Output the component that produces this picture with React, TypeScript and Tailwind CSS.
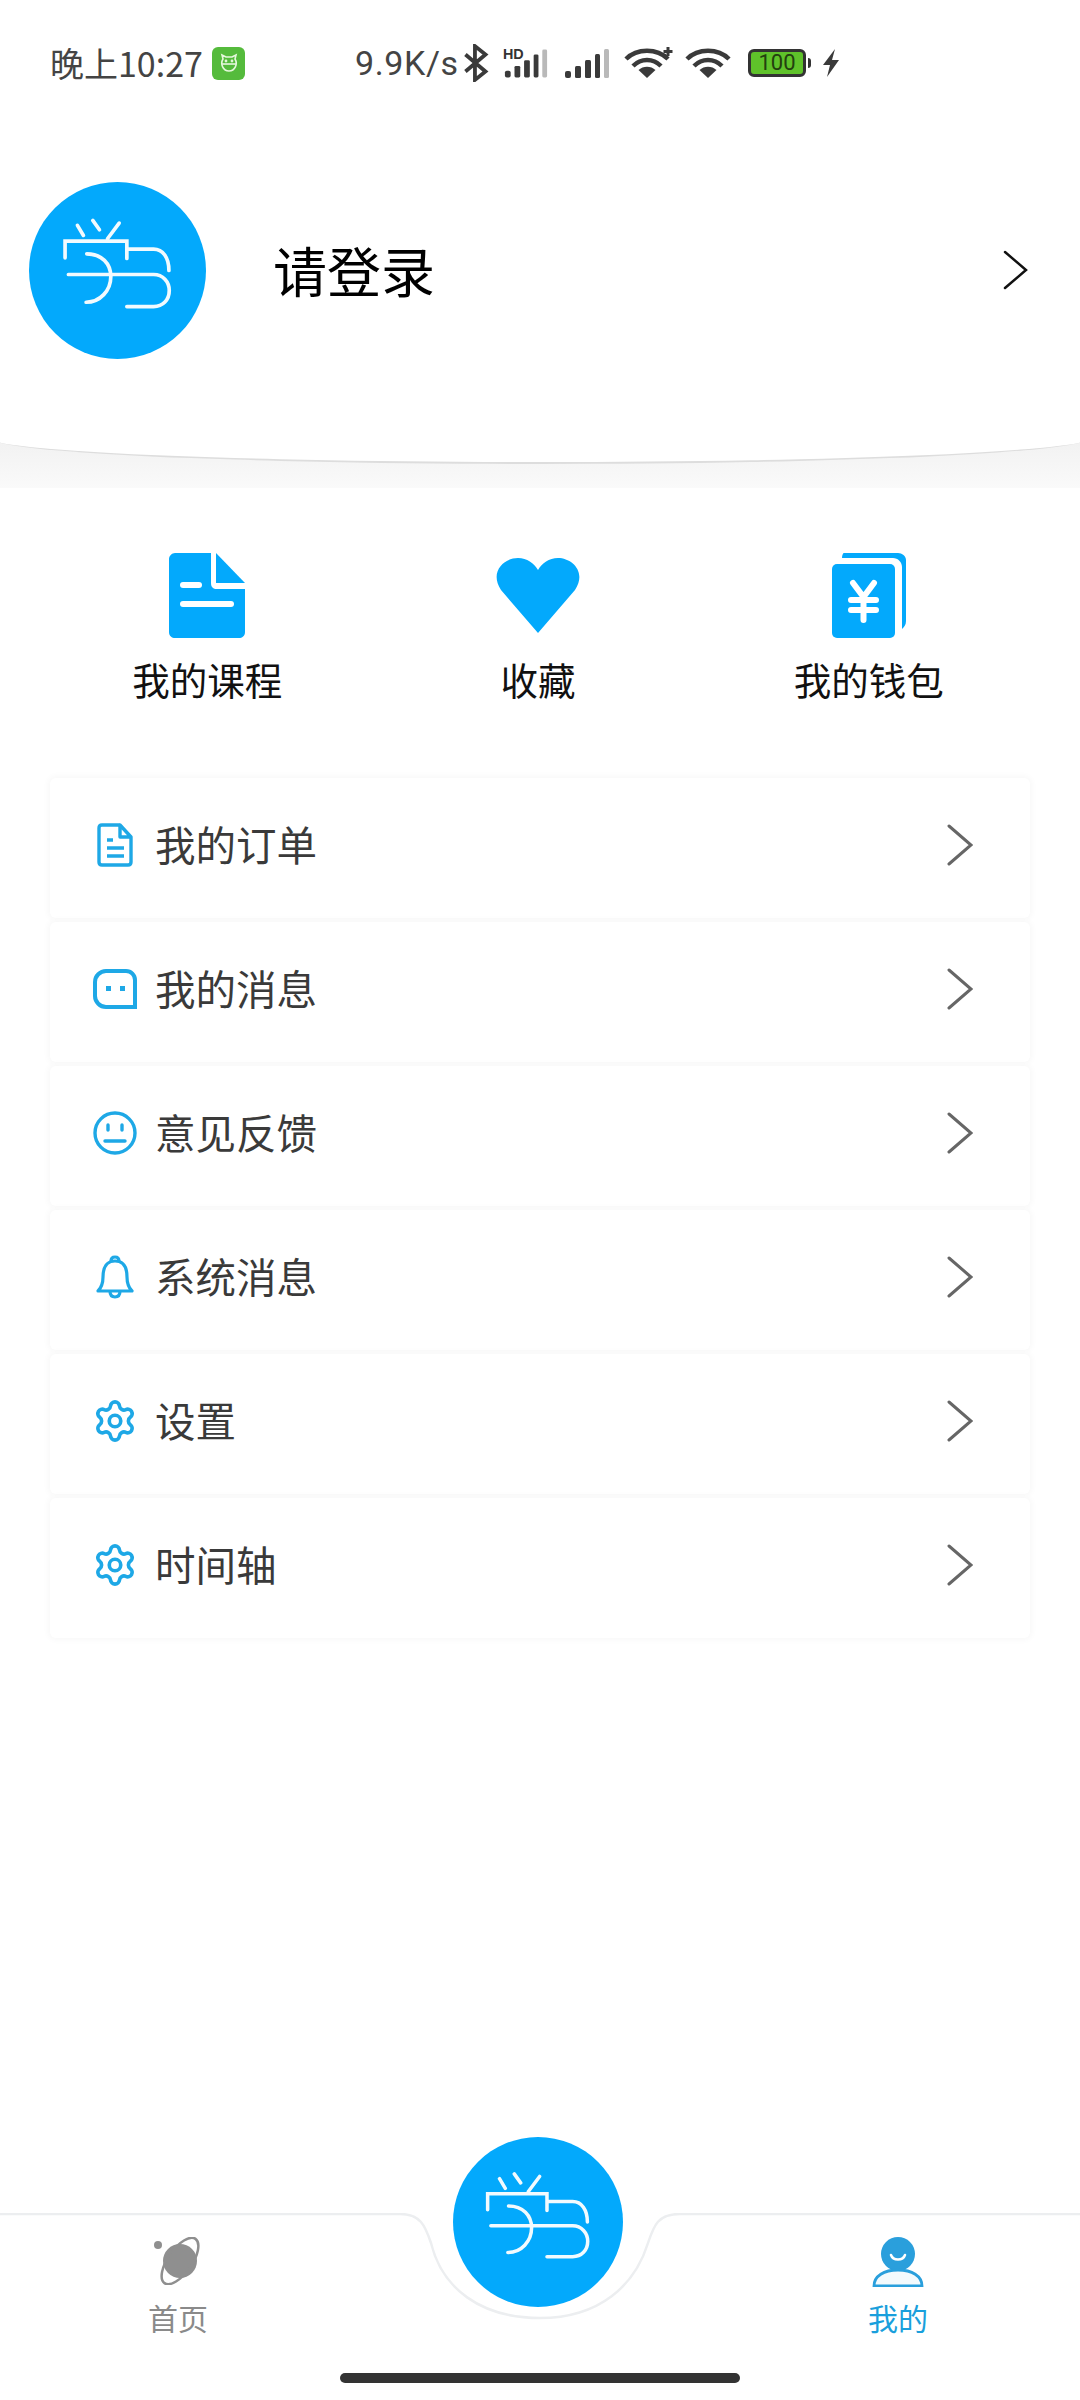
import React from "react";
import { Settings } from "lucide-react";

function Logo({ size }: { size: number }) {
  return (
    <svg width={size} height={size} viewBox="27 35 530 530" fill="none">
      <circle cx="292" cy="300" r="265" fill="#03a9fc" />
      <g stroke="#ffffff" strokeWidth="11" strokeLinecap="round" opacity="0.95">
        <path d="M172 165L190 195M218 150L238 178M297 158L262 205" />
        <path d="M135 262V212H320V264M320 236H400C428 236 446 262 446 300" />
        <path d="M200 250C245 250 272 280 272 318C272 360 240 395 198 395" />
        <path d="M145 312H400C428 312 447 334 447 360C447 388 428 408 400 408H320" />
      </g>
    </svg>
  );
}

function Chevron({ color, w, h, stroke }: { color: string; w: number; h: number; stroke: number }) {
  return (
    <svg width={w} height={h} viewBox={`0 0 ${w} ${h}`} fill="none">
      <path
        d={`M2 2L${w - 2} ${h / 2}L2 ${h - 2}`}
        stroke={color}
        strokeWidth={stroke}
        strokeLinecap="round"
        strokeLinejoin="miter"
      />
    </svg>
  );
}

function Signal({ hd }: { hd?: boolean }) {
  return (
    <svg width={hd ? 46 : 48} height="32" viewBox="0 0 48 32">
      {hd && (
        <text x="0" y="12" fontSize="15" fontWeight="700" fill="#333" fontFamily="'Liberation Sans',sans-serif">
          HD
        </text>
      )}
      <rect x="2" y="24" width="6" height="7" rx="2" fill="#3a3a3a" />
      <rect x="12" y="19" width="6" height="12" rx="1.5" fill="#3a3a3a" />
      <rect x="22" y="13" width="6" height="18" rx="1.5" fill="#3a3a3a" />
      <rect x="32" y="7" width="5" height="24" rx="1.5" fill="#3a3a3a" />
      <rect x="41" y="2" width="5" height="29" rx="1.5" fill="#b9b9b9" />
    </svg>
  );
}

function Wifi({ plus }: { plus?: boolean }) {
  return (
    <svg width="50" height="32" viewBox="0 0 50 32" fill="none">
      <g stroke="#3a3a3a" strokeWidth="4.5">
        <path d="M2 12C13 1 33 1 44 12" />
        <path d="M9 19C17 11 29 11 37 19" />
      </g>
      <path d="M23 31L14.5 23C19 18.5 27 18.5 31.5 23Z" fill="#3a3a3a" />
      {plus && <path d="M44 0V9M39.5 4.5H48.5" stroke="#3a3a3a" strokeWidth="3" />}
    </svg>
  );
}

function StatusBar() {
  return (
    <div className="flex h-[126px] items-center pl-[50px] text-[#444444]">
      <span className="w-[153px] text-[34px] leading-none">晚上10:27</span>
      <div className="ml-[9px] flex h-[33px] w-[33px] items-center justify-center rounded-[6px] bg-[#55bb3c]">
        <svg width="22" height="22" viewBox="0 0 22 22" fill="none" stroke="#e6f7dc" strokeWidth="1.6">
          <path d="M5 7L4 3L8 5H14L18 3L17 7C20 12 17 19 11 19C5 19 2 12 5 7Z" />
          <path d="M4 12H18" />
          <circle cx="8" cy="9" r="0.6" />
          <circle cx="14" cy="9" r="0.6" />
        </svg>
      </div>
      <span className="ml-[110px] w-[106px] text-[34px] leading-none font-['Roboto',sans-serif] tracking-[0.6px]">9.9K/s</span>
      <svg width="26" height="38" viewBox="0 0 24 36" fill="none" stroke="#3a3a3a" strokeWidth="3.6" className="ml-[2px]">
        <path d="M2 10L21 26L11 34V2L21 10L2 26" />
      </svg>
      <div className="ml-[14px]"><Signal hd /></div>
      <div className="ml-[14px]"><Signal /></div>
      <div className="ml-[13px]"><Wifi plus /></div>
      <div className="ml-[11px]"><Wifi /></div>
      <div className="ml-[13px] flex items-center">
        <div className="flex h-[28px] w-[58px] items-center justify-center rounded-[6px] border-[3.5px] border-[#333333] bg-[#5fc22a] text-[22px] leading-none text-[#23400f] font-['Roboto',sans-serif]">
          100
        </div>
        <div className="ml-[2px] h-[10px] w-[3px] rounded-r-sm bg-[#333333]" />
      </div>
      <svg width="20" height="30" viewBox="0 0 20 30" className="ml-[10px]">
        <path d="M14 1L2 17H9L6 29L18 12H11Z" fill="#3a3a3a" />
      </svg>
    </div>
  );
}

function Shortcut({ icon, label }: { icon: React.ReactNode; label: string }) {
  return (
    <div className="flex flex-col items-center">
      <div className="flex h-[85px] items-center justify-center">{icon}</div>
      <span className="mt-[16px] text-[37.500px] leading-[50px] text-[#111111]">{label}</span>
    </div>
  );
}

const rowBlue = "#1ea8e6";

const DocLine = (
  <svg width="36" height="44" viewBox="0 0 36 44" fill="none" stroke={rowBlue} strokeWidth="3.4">
    <path d="M23 2H5C3 2 2 3 2 5V39C2 41 3 42 5 42H31C33 42 34 41 34 39V14L23 2V14H34" strokeLinejoin="round" />
    <path d="M10 17H16M10 25H27M10 33H27" />
  </svg>
);
const ChatLine = (
  <svg width="44" height="40" viewBox="0 0 44 40" fill="none">
    <path d="M13 2H33C38 2 42 6 42 11V38H13C7 38 2 33 2 27V13C2 7 7 2 13 2Z" stroke={rowBlue} strokeWidth="4" />
    <rect x="13" y="17" width="5" height="5" fill={rowBlue} />
    <rect x="27" y="17" width="5" height="5" fill={rowBlue} />
  </svg>
);
const FaceLine = (
  <svg width="44" height="44" viewBox="0 0 44 44" fill="none" stroke={rowBlue} strokeWidth="3.4">
    <circle cx="22" cy="22" r="20" />
    <path d="M15 14V19M29 14V19M12 30H32" strokeLinecap="round" />
  </svg>
);
const BellLine = (
  <svg width="38" height="44" viewBox="0 0 38 44" fill="none" stroke={rowBlue} strokeWidth="3.2" strokeLinejoin="round">
    <path d="M2 36C6 32 7 28 7 22C7 12 11 6 19 6C27 6 31 12 31 22C31 28 32 32 36 36Z" />
    <path d="M15 6C15 3 17 2 19 2C21 2 23 3 23 6" />
    <path d="M14 36C14 40 16 42 19 42C22 42 24 40 24 36" />
  </svg>
);
const GearLine = <Settings size={46} color={rowBlue} strokeWidth={1.9} />;

function Row({ icon, label }: { icon: React.ReactNode; label: string }) {
  return (
    <div className="flex h-[140px] items-center rounded-[6px] bg-white pb-[7px] pl-[42px] pr-[57px] shadow-[0_0_6px_2px_#f8f8f8]">
      <div className="flex w-[46px] justify-center">{icon}</div>
      <span className="ml-[17px] text-[40.500px] leading-none text-[#3a3a3a]">{label}</span>
      <div className="ml-auto">
        <Chevron color="#666666" w={26} h={42} stroke={3} />
      </div>
    </div>
  );
}

export default function App() {
  return (
    <div className="flex h-[2400px] w-[1080px] flex-col overflow-hidden bg-white font-['Noto_Sans_CJK_SC','Noto_Sans',sans-serif]">
      <StatusBar />

      <div className="mt-[56px] flex h-[176px] items-center pl-[29px] pr-[52px]">
        <Logo size={177} />
        <span className="ml-[67px] text-[54px] leading-none text-black">请登录</span>
        <div className="ml-auto">
          <Chevron color="#111111" w={25} h={40} stroke={2.5} />
        </div>
      </div>

      <div className="mt-[80px] h-[50px] bg-gradient-to-b from-[#f1f1f1] to-[#fafafa]">
        <div className="mx-[-10px] h-[26px] rounded-b-[50%_100%] border-b-2 border-[#dddddd] bg-white" />
      </div>

      <div className="mt-[65px] grid grid-cols-3 pl-[42px] pr-[46px]">
        <Shortcut
          label="我的课程"
          icon={
            <svg width="76" height="85" viewBox="0 0 76 85">
              <path d="M6 0H42V30C42 34 44 36 48 36H76V79C76 83 73 85 70 85H6C3 85 0 83 0 79V6C0 3 3 0 6 0Z" fill="#03a9fc" />
              <path d="M47 0L76 30H47Z" fill="#03a9fc" />
              <rect x="11" y="29" width="22" height="6" rx="3" fill="#fff" />
              <rect x="11" y="48" width="54" height="6" rx="3" fill="#fff" />
            </svg>
          }
        />
        <Shortcut
          label="收藏"
          icon={
            <svg width="84" height="75" viewBox="0 0 84 75">
              <path d="M42 75L5 32C-7 14 8 0 22 0C31 0 38 5 42 12C46 5 53 0 62 0C76 0 91 14 79 32Z" fill="#03a9fc" />
            </svg>
          }
        />
        <Shortcut
          label="我的钱包"
          icon={
            <svg width="74" height="85" viewBox="0 0 74 85">
              <path d="M12 0H66C70 0 74 3 74 7V68C74 72 72 74 70 76V14C70 9 66 5 61 5H10C10 2 11 0 12 0Z" fill="#03a9fc" />
              <rect x="0" y="11" width="63" height="74" rx="5" fill="#03a9fc" />
              <path d="M21 30L31.500 44L42 30M19 47H44M19 57H44M31.500 44V67" stroke="#fff" strokeWidth="6" fill="none" strokeLinecap="round" />
            </svg>
          }
        />
      </div>

      <div className="mt-[74px] flex flex-col gap-[4px] px-[50px]">
        <Row icon={DocLine} label="我的订单" />
        <Row icon={ChatLine} label="我的消息" />
        <Row icon={FaceLine} label="意见反馈" />
        <Row icon={BellLine} label="系统消息" />
        <Row icon={GearLine} label="设置" />
        <Row icon={GearLine} label="时间轴" />
      </div>

      <div className="relative mt-auto h-[187px]">
        <svg className="absolute left-0 top-0" width="1080" height="120" viewBox="0 0 1080 120" fill="none">
          <path d="M0 1H400C420 1 425 12 431 30C442 75 480 105 540 105C600 105 635 72 648 30C654 12 658 1 680 1H1080" stroke="#eceef0" strokeWidth="2.500" />
        </svg>
        <div className="absolute left-[453px] top-[-76px]">
          <Logo size={170} />
        </div>
        <div className="flex h-[135px] items-start justify-between pl-[147px] pr-[151px] pt-[24px]">
          <div className="flex w-[62px] flex-col items-center">
            <svg width="54" height="48" viewBox="0 0 54 48" fill="none">
              <circle cx="29" cy="24" r="17" fill="#8f8f8f" />
              <ellipse cx="29" cy="24" rx="27" ry="12" transform="rotate(-55 29 24)" stroke="#8f8f8f" strokeWidth="2.500" />
              <circle cx="7" cy="8" r="4" fill="#8f8f8f" />
            </svg>
            <span className="mt-[12px] text-[30px] leading-[40px] text-[#8a8a8a]">首页</span>
          </div>
          <div className="flex w-[62px] flex-col items-center">
            <svg width="52" height="50" viewBox="0 0 52 50" fill="none">
              <circle cx="26" cy="17" r="17" fill="#2a9fdc" />
              <path d="M19 18C21 24 31 24 33 18" stroke="#fff" strokeWidth="2.500" strokeLinecap="round" />
              <path d="M2 49C2 39 12 33 26 33C40 33 50 39 50 49Z" fill="#f3fafd" stroke="#2a9fdc" strokeWidth="2.800" />
            </svg>
            <span className="mt-[10px] text-[30px] leading-[40px] text-[#1a9fdc]">我的</span>
          </div>
        </div>
        <div className="absolute bottom-[17px] left-[340px] h-[10px] w-[400px] rounded-full bg-[#333333]" />
      </div>
    </div>
  );
}
